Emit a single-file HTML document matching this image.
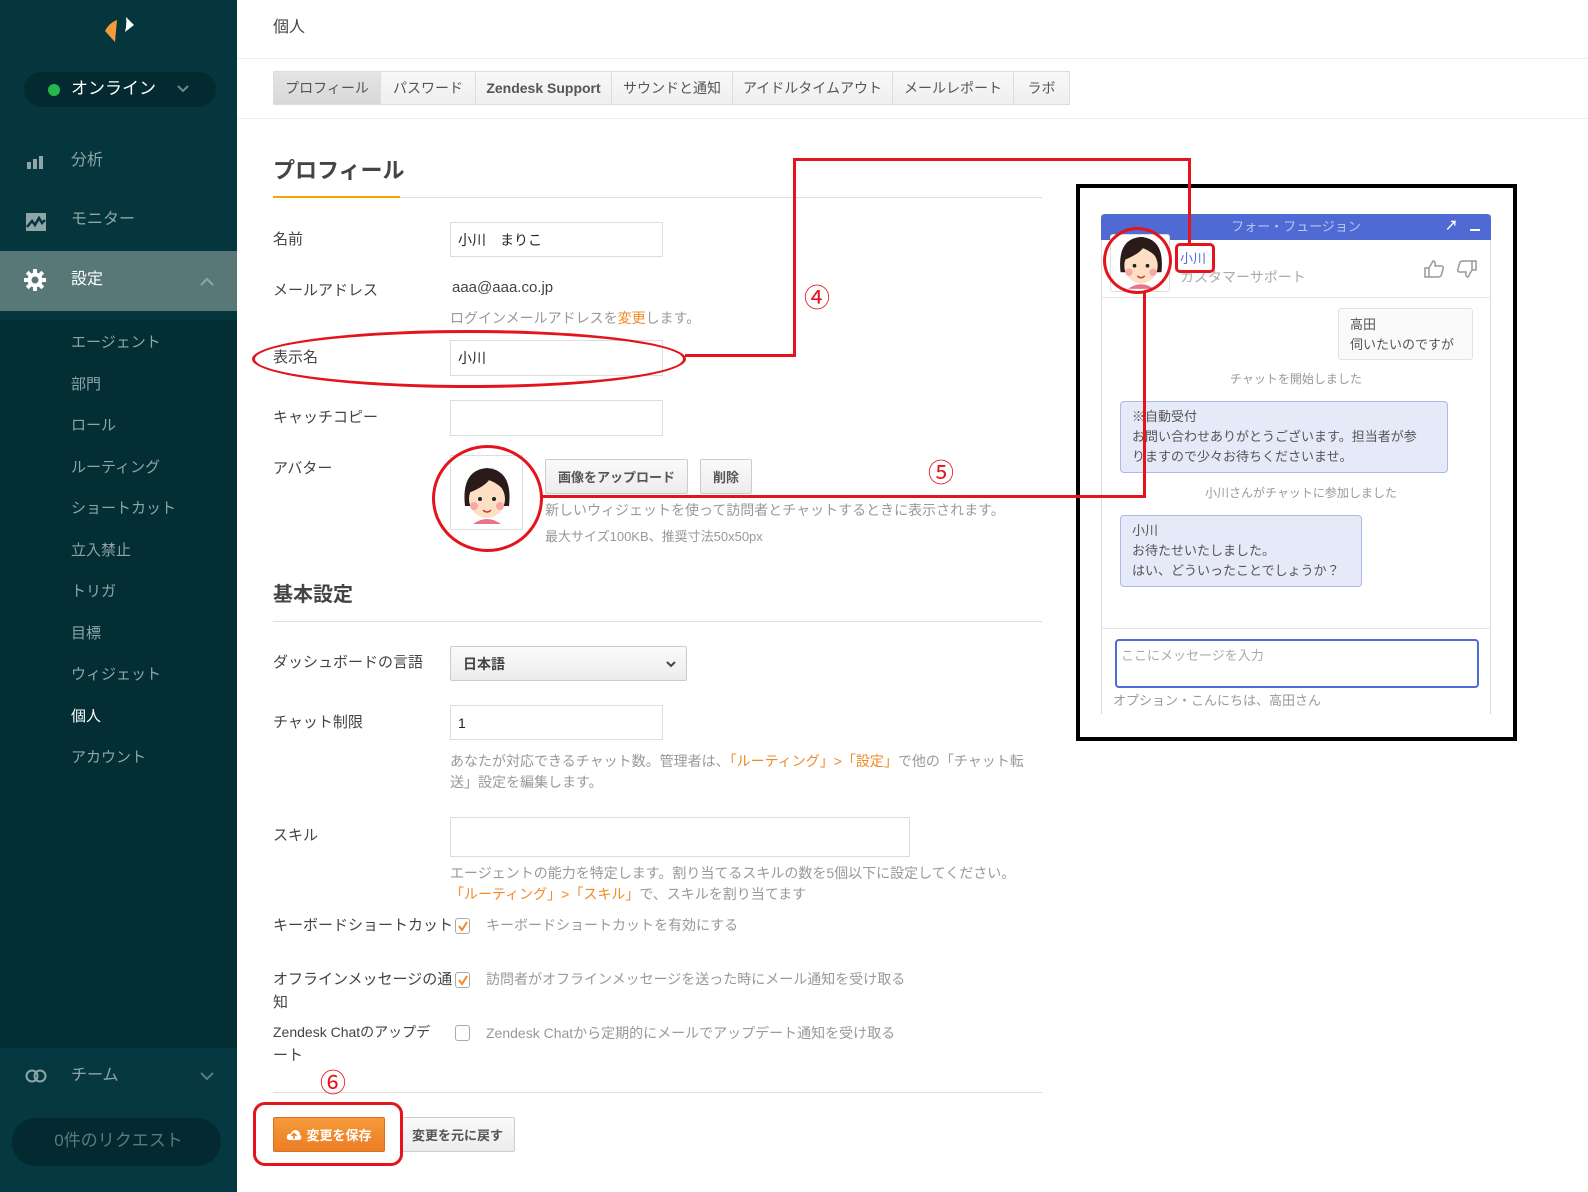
<!DOCTYPE html>
<html><head><meta charset="utf-8"><style>
*{margin:0;padding:0;box-sizing:border-box}
body{width:1588px;height:1192px;position:relative;overflow:hidden;background:#fff;font-family:"Liberation Sans","Noto Sans CJK JP",sans-serif;color:#444}
.a{position:absolute;white-space:nowrap;line-height:1}
.sb{position:absolute;left:0;top:0;width:237px;height:1192px;background:#05363d}
.nav{color:#8fa6a8;font-size:16px}
.sub{color:#8fa6a8;font-size:15px;left:71px}
.lbl{font-size:15px;color:#444;left:273px}
.inp{position:absolute;border:1px solid #ddd;background:#fff;font-size:14px;color:#222;padding-left:7px;display:flex;align-items:center}
.hint{font-size:14px;color:#999}
.or{color:#f08a24}
.tab{position:absolute;top:71px;height:34px;border:1px solid #ddd;border-left:none;background:linear-gradient(#f8f8f8,#efefef);font-size:14px;color:#555;display:flex;align-items:center;justify-content:center}
.btn{position:absolute;border:1px solid #ccc;border-radius:2px;background:linear-gradient(#fafafa,#ececec);font-size:13px;font-weight:bold;color:#555;display:flex;align-items:center;justify-content:center}
.cb{position:absolute;width:15px;height:16px;border:1px solid #aaa;border-radius:3px;background:#fff}
.red{position:absolute;border:3px solid #e3141b}
.rl{position:absolute;background:#e3141b}
.num{position:absolute;font-size:26px;color:#e3141b;line-height:1}
.ws{font-size:13px;color:#555;line-height:20px}
</style></head><body>
<div class="sb">
 <div style="position:absolute;left:0;top:320px;width:237px;height:728px;background:#032e34"></div>
 <div style="position:absolute;left:0;top:1048px;width:237px;height:144px;background:#053840"></div>
 <svg class="a" style="left:100px;top:14px" width="40" height="32" viewBox="0 0 40 32"><path d="M17 6 Q9 9 5 17 L15 28 Q13 16 17 6Z" fill="#f79a3e"/><path d="M17 6 L15 28 L11 17Z" fill="#f79a3e"/><path d="M26 3 L34 11 L25 18 Q27 10 26 3Z" fill="#fff"/></svg>
 <div style="position:absolute;left:24px;top:72px;width:192px;height:35px;border-radius:18px;background:#032a30"></div>
 <div style="position:absolute;left:48px;top:84px;width:12px;height:12px;border-radius:50%;background:#27b84c"></div>
 <div class="a" style="left:71px;top:80px;font-size:17px;color:#fff">オンライン</div>
 <svg class="a" style="left:177px;top:84px" width="12" height="10"><path d="M1 2 L6 7 L11 2" stroke="#6f8a8c" stroke-width="2" fill="none"/></svg>
 <svg class="a" style="left:27px;top:155px" width="18" height="14"><rect x="0" y="7" width="4" height="7" fill="#8fa6a8"/><rect x="6" y="4" width="4" height="10" fill="#8fa6a8"/><rect x="12" y="1" width="4" height="13" fill="#8fa6a8"/></svg>
 <div class="a nav" style="left:71px;top:153px">分析</div>
 <svg class="a" style="left:26px;top:213px" width="20" height="18"><rect x="0" y="0" width="20" height="18" fill="#8fa6a8"/><path d="M1 14 L6 8 L9 12 L13 5 L16 10 L19 7" stroke="#05363d" stroke-width="2.5" fill="none"/></svg>
 <div class="a nav" style="left:71px;top:212px">モニター</div>
 <div style="position:absolute;left:0;top:251px;width:237px;height:60px;background:#587878"></div>
 <svg class="a" style="left:24px;top:269px" width="22" height="22" viewBox="0 0 22 22"><g fill="#fff"><circle cx="11" cy="11" r="7.5"/><rect x="9" y="0" width="4" height="22"/><rect x="0" y="9" width="22" height="4"/><rect x="9" y="0" width="4" height="22" transform="rotate(45 11 11)"/><rect x="9" y="0" width="4" height="22" transform="rotate(-45 11 11)"/></g><circle cx="11" cy="11" r="3.5" fill="#587878"/></svg>
 <div class="a" style="left:71px;top:272px;font-size:16px;color:#fff">設定</div>
 <svg class="a" style="left:200px;top:277px" width="14" height="9"><path d="M1 8 L7 2 L13 8" stroke="#8fa6a8" stroke-width="2" fill="none"/></svg>
 <div class="a sub" style="top:335px">エージェント</div>
 <div class="a sub" style="top:377px">部門</div>
 <div class="a sub" style="top:418px">ロール</div>
 <div class="a sub" style="top:460px">ルーティング</div>
 <div class="a sub" style="top:501px">ショートカット</div>
 <div class="a sub" style="top:543px">立入禁止</div>
 <div class="a sub" style="top:584px">トリガ</div>
 <div class="a sub" style="top:626px">目標</div>
 <div class="a sub" style="top:667px">ウィジェット</div>
 <div class="a sub" style="top:709px;color:#fff">個人</div>
 <div class="a sub" style="top:750px">アカウント</div>
 <svg class="a" style="left:25px;top:1069px" width="22" height="14"><circle cx="7" cy="7" r="5.5" stroke="#8fa6a8" stroke-width="2" fill="none"/><circle cx="15" cy="7" r="5.5" stroke="#8fa6a8" stroke-width="2" fill="none"/></svg>
 <div class="a nav" style="left:71px;top:1068px">チーム</div>
 <svg class="a" style="left:200px;top:1072px" width="14" height="9"><path d="M1 1 L7 7 L13 1" stroke="#5d7a7c" stroke-width="2" fill="none"/></svg>
 <div style="position:absolute;left:12px;top:1118px;width:209px;height:48px;border-radius:24px;background:#032a30"></div>
 <div class="a" style="left:0;width:237px;text-align:center;top:1132px;font-size:17px;color:#5d7a7c">0件のリクエスト</div>
</div>

<div class="a" style="left:273px;top:20px;font-size:16px;color:#444">個人</div>
<div style="position:absolute;left:237px;top:58px;width:1351px;height:1px;background:#eee"></div>
<div style="position:absolute;left:237px;top:118px;width:1351px;height:1px;background:#eee"></div>
<div class="tab" style="left:273px;width:108px;border-left:1px solid #ddd;background:linear-gradient(#e4e4e4,#d8d8d8);color:#555">プロフィール</div>
<div class="tab" style="left:381px;width:95px">パスワード</div>
<div class="tab" style="left:476px;width:136px;font-weight:bold">Zendesk Support</div>
<div class="tab" style="left:612px;width:121px">サウンドと通知</div>
<div class="tab" style="left:733px;width:160px">アイドルタイムアウト</div>
<div class="tab" style="left:893px;width:121px">メールレポート</div>
<div class="tab" style="left:1014px;width:56px">ラボ</div>

<div class="a" style="left:273px;top:160px;font-size:22px;font-weight:bold;color:#444">プロフィール</div>
<div style="position:absolute;left:273px;top:197px;width:769px;height:1px;background:#ddd"></div>
<div style="position:absolute;left:273px;top:196px;width:127px;height:2px;background:#f0a800"></div>

<div class="a lbl" style="top:232px">名前</div>
<div class="inp" style="left:450px;top:222px;width:213px;height:35px">小川　まりこ</div>
<div class="a lbl" style="top:283px">メールアドレス</div>
<div class="a" style="left:452px;top:280px;font-size:15px;color:#444">aaa@aaa.co.jp</div>
<div class="a hint" style="left:450px;top:311px">ログインメールアドレスを<span class="or">変更</span>します。</div>
<div class="a lbl" style="top:350px">表示名</div>
<div class="inp" style="left:450px;top:340px;width:213px;height:36px">小川</div>
<div class="a lbl" style="top:410px">キャッチコピー</div>
<div class="inp" style="left:450px;top:400px;width:213px;height:36px"></div>
<div class="a lbl" style="top:461px">アバター</div>
<div style="position:absolute;left:450px;top:455px;width:73px;height:75px;border:1px solid #ddd;background:#fff"></div>
<svg class="a" style="left:459px;top:466px" width="56" height="58" viewBox="0 0 56 58"><path d="M6 40 Q2 4 28 2 Q54 4 50 40 Z" fill="#2a1a1a"/><ellipse cx="28" cy="33" rx="18" ry="19" fill="#fde0c4"/><path d="M9 26 Q14 10 28 10 Q42 10 47 26 Q40 18 30 14 Q26 20 12 26Z" fill="#2a1a1a"/><circle cx="21" cy="33" r="2" fill="#222"/><circle cx="35" cy="33" r="2" fill="#222"/><circle cx="15" cy="40" r="4" fill="#f8a8a8"/><circle cx="41" cy="40" r="4" fill="#f8a8a8"/><path d="M24 44 Q28 48 32 44" stroke="#c33" stroke-width="1.5" fill="none"/><path d="M14 58 Q28 48 42 58Z" fill="#e9748a"/></svg>
<div class="btn" style="left:545px;top:459px;width:143px;height:35px">画像をアップロード</div>
<div class="btn" style="left:700px;top:459px;width:52px;height:35px">削除</div>
<div class="a hint" style="left:545px;top:503px">新しいウィジェットを使って訪問者とチャットするときに表示されます。</div>
<div class="a hint" style="left:545px;top:530px;font-size:13px">最大サイズ100KB、推奨寸法50x50px</div>

<div class="a" style="left:273px;top:585px;font-size:20px;font-weight:bold;color:#444">基本設定</div>
<div style="position:absolute;left:273px;top:621px;width:769px;height:1px;background:#ddd"></div>
<div class="a lbl" style="top:655px">ダッシュボードの言語</div>
<div class="btn" style="left:450px;top:646px;width:237px;height:35px;justify-content:flex-start;padding-left:12px;font-weight:bold;color:#444;font-size:14px">日本語</div>
<svg class="a" style="left:666px;top:660px" width="10" height="8"><path d="M1 2 L5 6 L9 2" stroke="#444" stroke-width="2" fill="none"/></svg>
<div class="a lbl" style="top:715px">チャット制限</div>
<div class="inp" style="left:450px;top:705px;width:213px;height:35px">1</div>
<div class="a hint" style="left:450px;top:754px">あなたが対応できるチャット数。管理者は、<span class="or">「ルーティング」&gt;「設定」</span>で他の「チャット転</div>
<div class="a hint" style="left:450px;top:775px">送」設定を編集します。</div>
<div class="a lbl" style="top:828px">スキル</div>
<div class="inp" style="left:450px;top:817px;width:460px;height:40px"></div>
<div class="a hint" style="left:450px;top:866px">エージェントの能力を特定します。割り当てるスキルの数を5個以下に設定してください。</div>
<div class="a hint" style="left:450px;top:887px"><span class="or">「ルーティング」&gt;「スキル」</span>で、スキルを割り当てます</div>
<div class="a lbl" style="top:918px">キーボードショートカット</div>
<div class="cb" style="left:455px;top:918px"></div><svg class="a" style="left:457px;top:921px" width="12" height="11"><path d="M2 5 L5 9 L10 1" stroke="#f08a24" stroke-width="2" fill="none"/></svg>
<div class="a hint" style="left:486px;top:918px">キーボードショートカットを有効にする</div>
<div class="a lbl" style="top:972px">オフラインメッセージの通</div>
<div class="a lbl" style="top:995px">知</div>
<div class="cb" style="left:455px;top:972px"></div><svg class="a" style="left:457px;top:975px" width="12" height="11"><path d="M2 5 L5 9 L10 1" stroke="#f08a24" stroke-width="2" fill="none"/></svg>
<div class="a hint" style="left:486px;top:972px">訪問者がオフラインメッセージを送った時にメール通知を受け取る</div>
<div class="a lbl" style="top:1025px;font-size:14px">Zendesk Chatのアップデ</div>
<div class="a lbl" style="top:1048px">ート</div>
<div class="cb" style="left:455px;top:1025px"></div>
<div class="a hint" style="left:486px;top:1026px">Zendesk Chatから定期的にメールでアップデート通知を受け取る</div>
<div style="position:absolute;left:273px;top:1092px;width:769px;height:1px;background:#ddd"></div>
<div class="btn" style="left:273px;top:1117px;width:112px;height:35px;background:linear-gradient(#f59a3c,#ec7e25);border-color:#d9701c;color:#fff">
 <svg width="16" height="12" style="margin-right:4px"><path d="M4 11 Q0 11 1 7 Q2 4 5 5 Q6 1 10 1 Q14 2 14 6 Q16 7 15 10 Q14 11 12 11Z" fill="#fff"/><path d="M8 10 V5 M5.5 7 L8 4.5 L10.5 7" stroke="#ef8530" stroke-width="1.6" fill="none"/></svg>変更を保存</div>
<div class="btn" style="left:400px;top:1117px;width:115px;height:35px">変更を元に戻す</div>

<!-- chat widget screenshot -->
<div style="position:absolute;left:1076px;top:184px;width:441px;height:557px;border:4px solid #000;background:#fff"></div>
<div style="position:absolute;left:1101px;top:214px;width:390px;height:500px;border:1px solid #ddd;border-top:none;border-bottom:none;background:#fff"></div>
<div style="position:absolute;left:1101px;top:214px;width:390px;height:26px;background:#4f6bd3;border-radius:4px 4px 0 0"></div>
<div class="a" style="left:1101px;width:390px;text-align:center;top:220px;font-size:13px;color:#b8c6f0">フォー・フュージョン</div>
<div class="a" style="left:1445px;top:219px;font-size:13px;color:#fff;font-weight:bold">↗</div>
<div style="position:absolute;left:1470px;top:229px;width:10px;height:2px;background:#fff"></div>
<div style="position:absolute;left:1110px;top:234px;width:60px;height:58px;background:#fff;border:1px solid #ddd;border-radius:3px"></div>
<svg class="a" style="left:1115px;top:234px" width="52" height="56" viewBox="0 0 56 58"><path d="M6 40 Q2 4 28 2 Q54 4 50 40 Z" fill="#2a1a1a"/><ellipse cx="28" cy="33" rx="18" ry="19" fill="#fde0c4"/><path d="M9 26 Q14 10 28 10 Q42 10 47 26 Q40 18 30 14 Q26 20 12 26Z" fill="#2a1a1a"/><circle cx="21" cy="33" r="2" fill="#222"/><circle cx="35" cy="33" r="2" fill="#222"/><circle cx="15" cy="40" r="4" fill="#f8a8a8"/><circle cx="41" cy="40" r="4" fill="#f8a8a8"/><path d="M24 44 Q28 48 32 44" stroke="#c33" stroke-width="1.5" fill="none"/><path d="M14 58 Q28 48 42 58Z" fill="#e9748a"/></svg>
<div class="a" style="left:1180px;top:252px;font-size:13px;color:#4f6bd3">小川</div>
<div class="a" style="left:1180px;top:270px;font-size:14px;color:#aaa">カスタマーサポート</div>
<svg class="a" style="left:1424px;top:259px" width="22" height="20" viewBox="0 0 22 20"><path d="M1 9 H5 V18 H1Z M5 9 L9 2 Q12 2 11 7 H18 Q20 8 19 10 L17 17 Q16 18 14 18 H5" stroke="#999" stroke-width="1.5" fill="none"/></svg>
<svg class="a" style="left:1455px;top:259px" width="22" height="20" viewBox="0 0 22 20"><path d="M21 11 H17 V2 H21Z M17 11 L13 18 Q10 18 11 13 H4 Q2 12 3 10 L5 3 Q6 2 8 2 H17" stroke="#999" stroke-width="1.5" fill="none"/></svg>
<div style="position:absolute;left:1102px;top:297px;width:388px;height:1px;background:#e5e5e5"></div>
<div style="position:absolute;left:1338px;top:308px;width:135px;height:52px;border:1px solid #e3e3e3;border-radius:3px;background:#fafafa;padding:6px 11px" class="ws">高田<br>伺いたいのですが</div>
<div class="a" style="left:1101px;width:390px;text-align:center;top:373px;font-size:12px;color:#999">チャットを開始しました</div>
<div style="position:absolute;left:1120px;top:401px;width:328px;height:72px;border:1px solid #aab8ee;border-radius:4px;background:#e6eaf8;padding:5px 11px" class="ws">※自動受付<br>お問い合わせありがとうございます。担当者が参<br>りますので少々お待ちくださいませ。</div>
<div class="a" style="left:1101px;width:400px;text-align:center;top:487px;font-size:12px;color:#999">小川さんがチャットに参加しました</div>
<div style="position:absolute;left:1120px;top:515px;width:242px;height:72px;border:1px solid #aab8ee;border-radius:4px;background:#e6eaf8;padding:5px 11px" class="ws">小川<br>お待たせいたしました。<br>はい、どういったことでしょうか？</div>
<div style="position:absolute;left:1102px;top:628px;width:388px;height:1px;background:#e5e5e5"></div>
<div style="position:absolute;left:1115px;top:639px;width:364px;height:49px;border:2px solid #4f6bd3;border-radius:4px;background:#fff"></div>
<div class="a" style="left:1121px;top:649px;font-size:13px;color:#aaa">ここにメッセージを入力</div>
<div class="a" style="left:1113px;top:694px;font-size:13px;color:#999">オプション・こんにちは、高田さん</div>

<!-- red annotations -->
<div class="red" style="left:252px;top:330px;width:434px;height:58px;border-radius:50%/50%"></div>
<div class="rl" style="left:685px;top:354px;width:111px;height:3px"></div>
<div class="rl" style="left:793px;top:158px;width:3px;height:199px"></div>
<div class="rl" style="left:793px;top:158px;width:398px;height:3px"></div>
<div class="rl" style="left:1188px;top:158px;width:3px;height:86px"></div>
<div class="red" style="left:1175px;top:243px;width:40px;height:30px;border-radius:5px"></div>
<div class="red" style="left:1103px;top:227px;width:69px;height:67px;border-radius:50%"></div>
<div class="rl" style="left:1143px;top:293px;width:3px;height:205px"></div>
<div class="rl" style="left:541px;top:495px;width:605px;height:3px"></div>
<div class="red" style="left:432px;top:445px;width:111px;height:107px;border-radius:50%"></div>
<div class="num" style="left:804px;top:285px">④</div>
<div class="num" style="left:928px;top:460px">⑤</div>
<div class="num" style="left:320px;top:1070px">⑥</div>
<div class="red" style="left:253px;top:1102px;width:150px;height:64px;border-radius:12px"></div>
</body></html>
